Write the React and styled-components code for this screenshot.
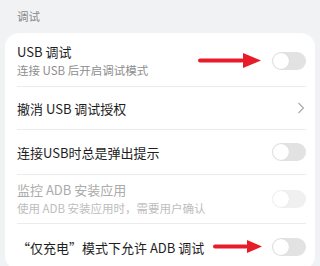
import React from 'react'
import styled, { createGlobalStyle } from 'styled-components'

const Global = createGlobalStyle`
  html, body { margin: 0; padding: 0; background: #f1f2f4; }
  body { font-family: "Noto Sans CJK SC", "Noto Sans", sans-serif; }
`

const Page = styled.div`
  width: 320px;
  height: 266px;
  overflow: hidden;
  background: #f1f2f4;
`

const Header = styled.div`
  height: 33px;
  padding: 0 17px;
  display: flex;
  align-items: center;
  font-size: 11.5px;
  color: #8a8a8a;
  box-sizing: border-box;
  padding-bottom: 1px;
`

const Card = styled.div`
  margin: 0 5px;
  background: #fff;
  border-radius: 14px;
  overflow: hidden;
`

const Row = styled.div`
  position: relative;
  height: ${p => p.$h}px;
  margin: 0 9px 0 12px;
  display: flex;
  align-items: center;
  justify-content: space-between;
  box-sizing: border-box;
  padding-top: ${p => p.$pt || 0}px;
  border-bottom: ${p => (p.$last ? 'none' : '1px solid #ececec')};
`

const Texts = styled.div`
  display: flex;
  flex-direction: column;
`

const Title = styled.div`
  font-size: 13px;
  line-height: 19px;
  color: ${p => (p.$disabled ? '#ababab' : '#1e1e1e')};
`

const Sub = styled.div`
  font-size: 11.5px;
  line-height: 19px;
  color: ${p => (p.$disabled ? '#bdbdbd' : '#8e8e8e')};
`

const Switch = styled.div`
  width: 34px;
  height: 18px;
  border-radius: 9px;
  background: ${p => (p.$disabled ? '#f0f0f0' : '#e2e2e2')};
  position: relative;
  flex-shrink: 0;
  &::after {
    content: '';
    position: absolute;
    left: 1px;
    top: 1px;
    width: 16px;
    height: 16px;
    border-radius: 50%;
    background: #fff;
    box-shadow: 0 0 1px rgba(0, 0, 0, ${p => (p.$disabled ? 0.08 : 0.15)});
  }
`

const Chevron = () => (
  <svg width="8" height="12" viewBox="0 0 8 12" style={{ marginRight: 1 }}>
    <path d="M1.5 1 L6.5 6 L1.5 11" fill="none" stroke="#a8a8a8" strokeWidth="1.1" />
  </svg>
)

const ArrowWrap = styled.svg`
  position: absolute;
  left: ${p => p.$x}px;
  top: ${p => p.$y}px;
`

const Arrow = ({ x, y, len, head, hh }) => (
  <ArrowWrap $x={x} $y={y} width={len} height={hh} viewBox={`0 0 ${len} ${hh}`}>
    <rect x="0" y={hh / 2 - 2} width={len - head + 1} height="4" rx="2" fill="#e81b2a" />
    <path d={`M${len - head} 0 L${len} ${hh / 2} L${len - head} ${hh} Z`} fill="#e81b2a" />
  </ArrowWrap>
)

const App = () => (
  <Page>
    <Global />
    <Header>调试</Header>
    <Card>
      <Row $h={54} $pt={3}>
        <Texts>
          <Title>USB 调试</Title>
          <Sub>连接 USB 后开启调试模式</Sub>
        </Texts>
        <Switch />
        <Arrow x={181} y={20} len={63} head={18} hh={15} />
      </Row>
      <Row $h={43}>
        <Title>撤消 USB 调试授权</Title>
        <Chevron />
      </Row>
      <Row $h={45}>
        <Title>连接USB时总是弹出提示</Title>
        <Switch />
      </Row>
      <Row $h={49}>
        <Texts>
          <Title $disabled>监控 ADB 安装应用</Title>
          <Sub $disabled>使用 ADB 安装应用时，需要用户确认</Sub>
        </Texts>
        <Switch $disabled />
      </Row>
      <Row $h={46} $last>
        <Title>“仅充电”模式下允许 ADB 调试</Title>
        <Switch />
        <Arrow x={196} y={16} len={49} head={15} hh={13} />
      </Row>
    </Card>
  </Page>
)

export default App
